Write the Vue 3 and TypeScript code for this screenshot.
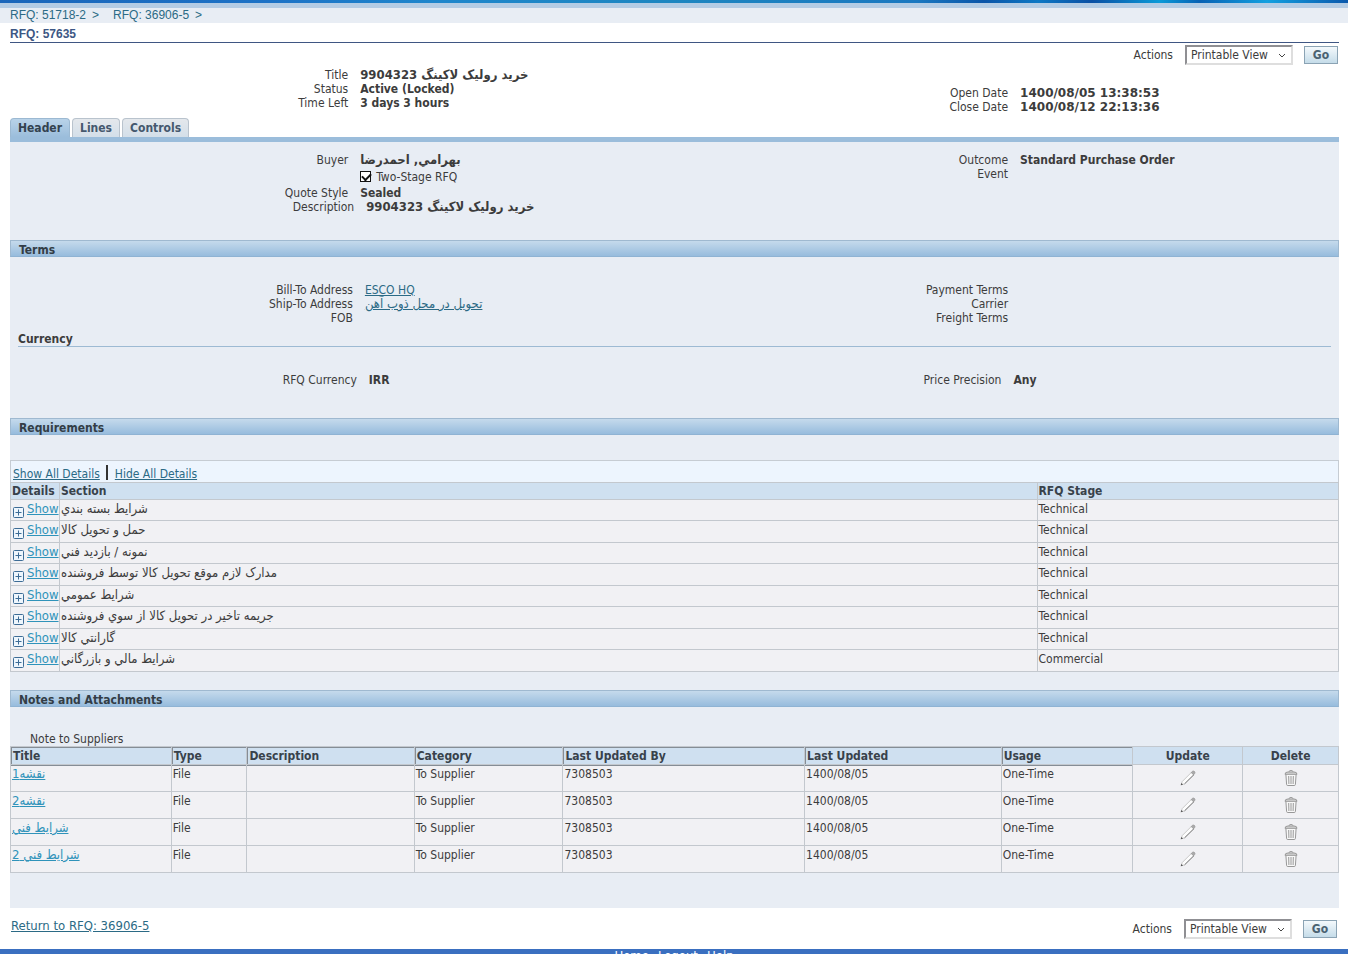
<script setup lang="ts">
import { ref } from 'vue'

interface Requirement { section: string; stage: string }

const twoStage = ref(true)
const requirements: Requirement[] = [
  { section: 'شرايط بسته بندي', stage: 'Technical' },
  { section: 'حمل و تحويل کالا', stage: 'Technical' },
  { section: 'نمونه / بازديد فني', stage: 'Technical' },
  { section: 'مدارک لازم موقع تحويل کالا توسط فروشنده', stage: 'Technical' },
  { section: 'شرايط عمومي', stage: 'Technical' },
  { section: 'جريمه تاخير در تحويل کالا از سوي فروشنده', stage: 'Technical' },
  { section: 'گارانتي کالا', stage: 'Technical' },
  { section: 'شرايط مالي و بازرگاني', stage: 'Commercial' },
]
const attachmentHeads: string[] = ['Title', 'Type', 'Description', 'Category', 'Last Updated By', 'Last Updated', 'Usage']
const attachments: string[] = ['نقشه1', 'نقشه2', 'شرايط فني', 'شرايط فني 2']
</script>

<template>
  <div class="page">
    <div class="brand-strip"></div>
    <nav class="crumbs" aria-label="Breadcrumb">
      <a href="#">RFQ: 51718-2</a><span>&gt;</span>
      <a href="#">RFQ: 36906-5</a><span>&gt;</span>
    </nav>

    <main class="content">
      <h1>RFQ: 57635</h1>
      <form class="actions" @submit.prevent>
        <label for="action-top">Actions</label>
        <span class="select-wrap">
          <select id="action-top"><option>Printable View</option></select>
          <svg viewBox="0 0 8 6"><path d="M1 1l3 3 3-3" /></svg>
        </span>
        <button type="submit">Go</button>
      </form>

      <div class="pair summary">
        <dl>
          <dt>Title</dt><dd class="fa">خريد روليک لاکينگ 9904323</dd>
          <dt>Status</dt><dd>Active (Locked)</dd>
          <dt>Time Left</dt><dd>3 days 3 hours</dd>
        </dl>
        <dl class="late">
          <dt>Open Date</dt><dd class="date">1400/08/05 13:38:53</dd>
          <dt>Close Date</dt><dd class="date">1400/08/12 22:13:36</dd>
        </dl>
      </div>

      <nav class="tabs" aria-label="Sections">
        <a href="#" class="active" aria-current="page">Header</a>
        <a href="#">Lines</a>
        <a href="#">Controls</a>
      </nav>

      <div class="panel">
        <div class="pair general">
          <div>
            <dl>
              <dt>Buyer</dt><dd class="fa">بهرامي, احمدرضا</dd>
              <dt></dt>
              <dd class="check"><input id="two-stage" v-model="twoStage" type="checkbox"><label for="two-stage">Two-Stage RFQ</label></dd>
              <dt>Quote Style</dt><dd>Sealed</dd>
            </dl>
            <dl class="shifted">
              <dt>Description</dt><dd class="fa">خريد روليک لاکينگ 9904323</dd>
            </dl>
          </div>
          <dl>
            <dt>Outcome</dt><dd>Standard Purchase Order</dd>
            <dt>Event</dt><dd></dd>
          </dl>
        </div>

        <h2>Terms</h2>
        <div class="pair terms">
          <dl>
            <dt>Bill-To Address</dt><dd><a href="#">ESCO HQ</a></dd>
            <dt>Ship-To Address</dt><dd class="fa"><a href="#">تحويل در محل ذوب آهن</a></dd>
            <dt>FOB</dt><dd></dd>
          </dl>
          <dl>
            <dt>Payment Terms</dt><dd></dd>
            <dt>Carrier</dt><dd></dd>
            <dt>Freight Terms</dt><dd></dd>
          </dl>
        </div>
        <h3>Currency</h3>
        <div class="pair currency">
          <dl><dt>RFQ Currency</dt><dd>IRR</dd></dl>
          <dl><dt>Price Precision</dt><dd>Any</dd></dl>
        </div>

        <h2>Requirements</h2>
        <div class="toolbar">
          <a href="#">Show All Details</a><i></i><a href="#">Hide All Details</a>
        </div>
        <table class="requirements">
          <colgroup><col class="r-details"><col><col class="r-stage"></colgroup>
          <thead><tr><th>Details</th><th>Section</th><th>RFQ Stage</th></tr></thead>
          <tbody>
            <tr v-for="item in requirements" :key="item.section">
              <td>
                <a href="#" class="show">
                  <svg viewBox="0 0 11 11"><rect x=".5" y=".5" width="10" height="10" rx="1" /><path d="M2.5 5.5h6M5.5 2.5v6" /></svg>
                  <span>Show</span>
                </a>
              </td>
              <td class="fa">{{ item.section }}</td>
              <td>{{ item.stage }}</td>
            </tr>
          </tbody>
        </table>

        <h2 class="notes-head">Notes and Attachments</h2>
        <p class="note">Note to Suppliers</p>
        <table class="attachments">
          <colgroup>
            <col class="a-title"><col class="a-type"><col class="a-desc"><col class="a-cat"><col class="a-by">
            <col class="a-date"><col class="a-usage"><col class="a-update"><col>
          </colgroup>
          <thead>
            <tr>
              <th v-for="head in attachmentHeads" :key="head" class="sortable">{{ head }}</th>
              <th class="center">Update</th><th class="center">Delete</th>
            </tr>
          </thead>
          <tbody>
            <tr v-for="title in attachments" :key="title">
              <td class="fa"><a href="#">{{ title }}</a></td>
              <td>File</td><td></td><td>To Supplier</td><td>7308503</td><td>1400/08/05</td><td>One-Time</td>
              <td class="icon">
                <button type="button" aria-label="Update">
                  <svg viewBox="0 0 16 16">
                    <path d="M1.2 14.8l1-3.2L11.6 2.2l2.4 2.4-9.4 9.2z" fill="#fdfdfd" stroke="#bcbcbc" stroke-width=".8" />
                    <path d="M4.6 13.8L14 4.6" stroke="#808080" fill="none" />
                    <path d="M11.2 2.6l1.3-1.3q1.1-.7 2 .2t.2 2l-1.3 1.3z" fill="#aaa" stroke="#8c8c8c" stroke-width=".6" />
                    <path d="M.7 15.3l.7-2.4 1.7 1.7z" fill="#555" />
                  </svg>
                </button>
              </td>
              <td class="icon">
                <button type="button" aria-label="Delete">
                  <svg viewBox="0 0 16 16" fill="none" stroke="#989898">
                    <path d="M2.9 4.5l.7 10q.1 1 1.1 1h6.6q1 0 1.1-1l.7-10" fill="#f8f8f8" />
                    <path d="M2 4.3q0-2.3 3-2.3h6q3 0 3 2.3z" fill="#d5d5d5" />
                    <path d="M6 1.8q0-1.3 2-1.3t2 1.3" />
                    <path d="M5.7 6l.2 8M8 6v8M10.3 6l-.2 8" />
                  </svg>
                </button>
              </td>
            </tr>
          </tbody>
        </table>
      </div>

      <div class="bottom">
        <a href="#">Return to RFQ: 36906-5</a>
        <form class="actions" @submit.prevent>
          <label for="action-bottom">Actions</label>
          <span class="select-wrap">
            <select id="action-bottom"><option>Printable View</option></select>
            <svg viewBox="0 0 8 6"><path d="M1 1l3 3 3-3" /></svg>
          </span>
          <button type="submit">Go</button>
        </form>
      </div>
    </main>
    <footer><a href="#">Home</a><a href="#">Logout</a><a href="#">Help</a></footer>
  </div>
</template>

<style>
body { background: #fff; }
</style>

<style scoped>
.page {
  font: 12px/14px "DejaVu Sans Condensed", "Noto Sans", sans-serif;
  color: #3c3c3c;
  height: 100vh;
  overflow: hidden;
}
.page *, .page { box-sizing: border-box; }
a { color: #2b6a85; }
dl, dd, h1, h2, h3, p { margin: 0; }
.brand-strip {
  height: 8px;
  border-bottom: 5px solid #b4cce4;
  background: linear-gradient(90deg, #1b66ba, #1c72c6 20%, #1e86cc 32%, #1d86c0 50%, #1a78c0 68%, #0a55a8 73%, #0d78c4 77%, #0a50a4 81%, #0a9ad8 86%, #0862b4 89%, #12a0e0 94%, #0a58ac);
}
.crumbs {
  height: 15px;
  padding-left: 10px;
  background: #e8edf4;
  font: 12px/14px "Liberation Sans", Arial, sans-serif;
  color: #2b6a85;
}
.crumbs a { text-decoration: none; }
.crumbs span { margin: 0 14px 0 6px; }
.content { padding: 0 9px 0 10px; }
h1 {
  height: 20px;
  border-bottom: 1px solid #3f5683;
  font: bold 12px/22px "Liberation Sans", Arial, sans-serif;
  color: #3d5784;
}
.actions {
  display: flex;
  justify-content: flex-end;
  align-items: center;
  height: 20px;
}
h1 + .actions { margin: 2px 1px 0 0; }
.select-wrap { position: relative; margin: 0 11px 0 12px; }
.select-wrap svg {
  position: absolute;
  right: 7px;
  top: 8px;
  width: 8px;
  height: 6px;
  fill: none;
  stroke: #444;
  pointer-events: none;
}
select {
  display: block;
  appearance: none;
  width: 108px;
  height: 20px;
  padding: 0 4px;
  border: 2px solid #dedede;
  border-top-color: #8f8f93;
  border-left-color: #8f8f93;
  border-radius: 0;
  background: #fff;
  color: #3c3c3c;
  font: inherit;
}
.actions button {
  width: 34px;
  height: 18px;
  padding: 0;
  border: 1px solid #8ba3b4;
  background: linear-gradient(#f4f9fc, #c5dce9);
  color: #4b6272;
  font: inherit;
  font-weight: bold;
}
.pair { display: grid; grid-template-columns: 1fr 1fr; }
.pair dl {
  display: grid;
  grid-template-columns: 50.9% 1fr;
  column-gap: 12px;
  grid-auto-rows: minmax(14px, auto);
  align-content: start;
}
.pair > dl:last-child { grid-template-columns: 50.2% 1fr; }
dt { text-align: right; }
dd { font-weight: bold; white-space: nowrap; }
dd a { font-weight: normal; }
.fa { font-size: 13px; line-height: 14px; }
.date { font-family: "DejaVu Sans", sans-serif; }
.summary { height: 50px; margin-top: 3px; }
.late { padding-top: 18px; }
.tabs {
  display: flex;
  gap: 2px;
  border-bottom: 5px solid #9bbddb;
}
.tabs a {
  height: 19px;
  padding: 2px 7px;
  border: 1px solid #b9c3cd;
  border-bottom: 0;
  border-radius: 4px 4px 0 0;
  background: linear-gradient(#e4e8ec, #d3dfe9);
  color: #45586e;
  font-weight: bold;
  text-decoration: none;
}
.tabs .active { background: linear-gradient(#b9d3e9, #9bbddb); border-color: #9cb9d2; color: #33424f; }
.panel { background: #e8edf4; padding: 11px 0 35px; }
.general { height: 87px; }
.pair .shifted { grid-template-columns: 51.8% 1fr; }
.check { display: flex; align-items: center; height: 19px; padding-top: 1px; font-weight: normal; }
.check input {
  appearance: none;
  width: 11px;
  height: 11px;
  margin: 0 5px 2px 0;
  border: 1px solid #111;
  background: #fff;
  position: relative;
}
.check input:checked::after {
  content: "";
  position: absolute;
  left: 1px;
  top: 0;
  width: 7px;
  height: 4px;
  border: solid #111;
  border-width: 0 0 2px 2px;
  transform: translateY(1px) rotate(-45deg);
}
h2 {
  height: 17px;
  padding-left: 8px;
  border: 1px solid #9fb9d0;
  border-bottom-color: #8fb3d3;
  background: linear-gradient(#c5daec, #97bcdd);
  font-size: 12px;
  line-height: 18px;
  color: #333d46;
}
.terms { margin-top: 26px; }
.pair.terms > dl:first-child { grid-template-columns: 51.6% 1fr; }
h3 {
  margin: 7px 8px 26px;
  border-bottom: 1px solid #9dbad3;
  font-size: 12px;
  line-height: 14px;
}
.pair.currency { height: 45px; }
.pair.currency > dl:first-child { grid-template-columns: 52.2% 1fr; }
.pair.currency > dl:last-child { grid-template-columns: 49.2% 1fr; }
.toolbar {
  display: flex;
  align-items: center;
  height: 22px;
  margin-top: 25px;
  padding: 4px 2px 0;
  border: 1px solid #c6ccd3;
  border-bottom: 0;
  background: #edf5fe;
}
.toolbar i { width: 2px; height: 15px; margin: 0 7px 2px 6px; background: #333; }
table { width: 100%; border-collapse: collapse; table-layout: fixed; background: #f1f1f4; }
th, td {
  border: 1px solid #c3c8ce;
  padding: 2px 1px 0;
  text-align: left;
  vertical-align: top;
  white-space: nowrap;
}
th { background: #cfe0f0; color: #38424b; }
.r-details { width: 49px; }
.r-stage { width: 22.7%; }
.requirements th { height: 17px; padding-top: 1px; }
.requirements td { height: 21px; padding-top: 2px; }
.requirements tbody tr:nth-child(even) td { height: 22px; }
.show { display: flex; align-items: flex-start; gap: 3px; height: 17px; text-decoration: none; color: #2f93ba; font-size: 13px; }
.show span { text-decoration: underline; }
.show svg { width: 11px; height: 11px; margin: 5px 0 0 1px; fill: #eef6fd; stroke: #3d6c96; flex: none; }
.notes-head { margin-top: 18px; }
.note { margin: 26px 0 0 20px; line-height: 13px; }
.a-title { width: 12.1%; }
.a-type { width: 5.7%; }
.a-desc { width: 12.6%; }
.a-cat { width: 11.2%; }
.a-by { width: 18.2%; }
.a-date { width: 14.8%; }
.a-usage { width: 9.9%; }
.a-update { width: 8.3%; }
.attachments th { height: 18px; }
.attachments .sortable { box-shadow: inset 1px 1px #858d95, 0 1px #858d95, 1px 0 #858d95; padding-left: 2px; }
.attachments .center, .attachments .icon { text-align: center; }
.attachments td { height: 27px; }
.attachments td a { color: #2f93ba; }
.icon button { width: 16px; height: 16px; margin-top: 3px; padding: 0; border: 0; background: none; }
.icon svg { display: block; width: 16px; height: 16px; }
.bottom { display: flex; justify-content: space-between; height: 41px; padding: 11px 2px 0 1px; }
.bottom > a { font-size: 13px; }
footer {
  display: flex;
  justify-content: center;
  gap: 9px;
  height: 24px;
  background: #3a6fc0;
}
footer a { color: #fff; font-size: 13px; text-decoration: none; }
</style>
